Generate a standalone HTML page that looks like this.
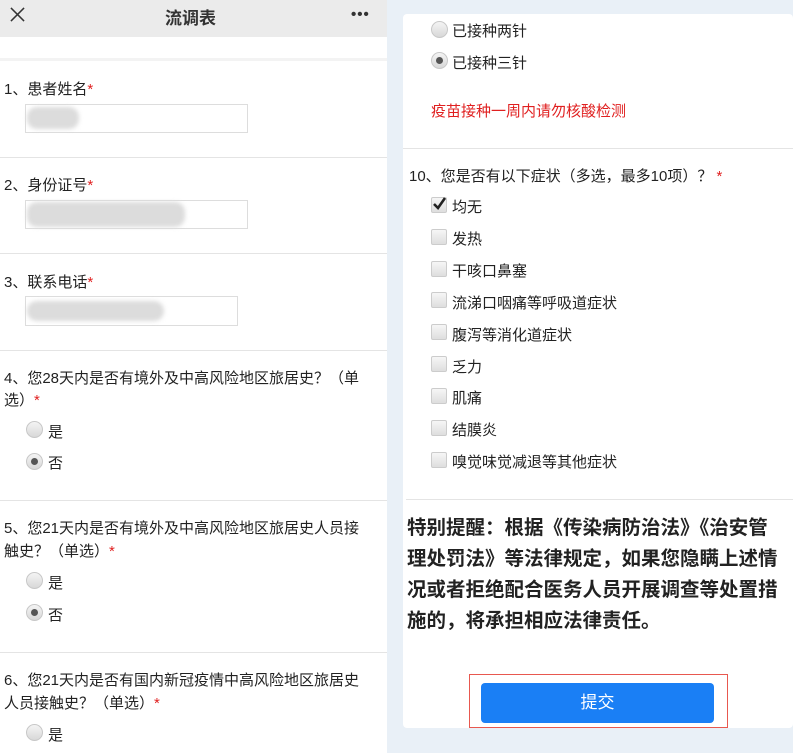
<!DOCTYPE html>
<html><head><meta charset="utf-8"><style>
*{margin:0;padding:0;box-sizing:border-box}
body{width:793px;height:753px;overflow:hidden;background:#e9f0f7;font-family:"Liberation Sans","Noto Sans CJK SC",sans-serif;color:#222;position:relative}
.a{position:absolute;white-space:nowrap}
.t{font-size:15px;line-height:20px}
.r{color:#e02020}
.sep{position:absolute;height:1px;background:#e4e4e4}
.inp{position:absolute;border:1px solid #ddd;background:#fff}
.blur{position:absolute;background:#dcdcdc;border-radius:10px;filter:blur(2px)}
.rad{position:absolute;width:17px;height:17px;border-radius:50%;background:linear-gradient(#f4f4f4,#d8d8d8);border:1px solid #c8c8c8}
.rad.on::after{content:"";position:absolute;left:4px;top:4px;width:7px;height:7px;border-radius:50%;background:#555}
.cb{position:absolute;width:16px;height:16px;border-radius:2px;background:linear-gradient(#f6f6f6,#dedede);border:1px solid #ccc}
</style></head><body>
<div class="a" style="left:0;top:0;width:387px;height:753px;background:#fff"></div>
<div class="a" style="left:0;top:0;width:387px;height:37px;background:#ebebeb"></div>
<svg class="a" style="left:10px;top:7px" width="15" height="15" viewBox="0 0 16 16"><path d="M1 1L15 15M15 1L1 15" stroke="#333" stroke-width="1.6"/></svg>
<div class="a" style="left:165px;top:4px;font-size:17px;font-weight:bold;color:#333">流调表</div>
<div class="a" style="left:351px;top:6px;font-size:15px;font-weight:bold;color:#333;letter-spacing:1px">•••</div>
<div class="a" style="left:0;top:58px;width:387px;height:3px;background:#f3f3f3"></div>

<div class="a t" style="left:4px;top:80px">1、患者姓名<span class="r">*</span></div>
<div class="inp" style="left:25px;top:104px;width:223px;height:29px"></div>
<div class="blur" style="left:27px;top:107px;width:52px;height:22px"></div>
<div class="sep" style="left:0;top:157px;width:387px"></div>

<div class="a t" style="left:4px;top:176px">2、身份证号<span class="r">*</span></div>
<div class="inp" style="left:25px;top:200px;width:223px;height:29px"></div>
<div class="blur" style="left:27px;top:202px;width:158px;height:25px"></div>
<div class="sep" style="left:0;top:253px;width:387px"></div>

<div class="a t" style="left:4px;top:273px">3、联系电话<span class="r">*</span></div>
<div class="inp" style="left:25px;top:296px;width:213px;height:30px"></div>
<div class="blur" style="left:27px;top:301px;width:137px;height:20px"></div>
<div class="sep" style="left:0;top:350px;width:387px"></div>

<div class="a t" style="left:4px;top:369px">4、您28天内是否有境外及中高风险地区旅居史？（单</div>
<div class="a t" style="left:4px;top:391px">选）<span class="r">*</span></div>
<div class="rad" style="left:26px;top:421px"></div><div class="a t" style="left:48px;top:423px">是</div>
<div class="rad on" style="left:26px;top:453px"></div><div class="a t" style="left:48px;top:454px">否</div>
<div class="sep" style="left:0;top:500px;width:387px"></div>

<div class="a t" style="left:4px;top:519px">5、您21天内是否有境外及中高风险地区旅居史人员接</div>
<div class="a t" style="left:4px;top:542px">触史？（单选）<span class="r">*</span></div>
<div class="rad" style="left:26px;top:572px"></div><div class="a t" style="left:48px;top:574px">是</div>
<div class="rad on" style="left:26px;top:604px"></div><div class="a t" style="left:48px;top:606px">否</div>
<div class="sep" style="left:0;top:652px;width:387px"></div>

<div class="a t" style="left:4px;top:671px">6、您21天内是否有国内新冠疫情中高风险地区旅居史</div>
<div class="a t" style="left:4px;top:694px">人员接触史？（单选）<span class="r">*</span></div>
<div class="rad" style="left:26px;top:724px"></div><div class="a t" style="left:48px;top:726px">是</div>

<div class="a" style="left:403px;top:14px;width:390px;height:714px;background:#fff;border-radius:4px"></div>
<div class="rad" style="left:431px;top:21px"></div><div class="a t" style="left:452px;top:22px">已接种两针</div>
<div class="rad on" style="left:431px;top:52px"></div><div class="a t" style="left:452px;top:54px">已接种三针</div>
<div class="a t r" style="left:431px;top:102px">疫苗接种一周内请勿核酸检测</div>
<div class="sep" style="left:403px;top:148px;width:390px"></div>
<div class="a t" style="left:409px;top:167px">10、您是否有以下症状（多选，最多10项）？ <span class="r">*</span></div>
<div class="cb" style="left:431px;top:197px"></div><svg class="a" style="left:432px;top:196px" width="15" height="15" viewBox="0 0 15 15"><path d="M2 8L6 12L13 2" stroke="#222" stroke-width="2.6" fill="none"/></svg>
<div class="a t" style="left:452px;top:198px">均无</div>
<div class="cb" style="left:431px;top:229px"></div><div class="a t" style="left:452px;top:230px">发热</div>
<div class="cb" style="left:431px;top:261px"></div><div class="a t" style="left:452px;top:262px">干咳口鼻塞</div>
<div class="cb" style="left:431px;top:292px"></div><div class="a t" style="left:452px;top:294px">流涕口咽痛等呼吸道症状</div>
<div class="cb" style="left:431px;top:324px"></div><div class="a t" style="left:452px;top:326px">腹泻等消化道症状</div>
<div class="cb" style="left:431px;top:356px"></div><div class="a t" style="left:452px;top:358px">乏力</div>
<div class="cb" style="left:431px;top:388px"></div><div class="a t" style="left:452px;top:389px">肌痛</div>
<div class="cb" style="left:431px;top:420px"></div><div class="a t" style="left:452px;top:421px">结膜炎</div>
<div class="cb" style="left:431px;top:452px"></div><div class="a t" style="left:452px;top:453px">嗅觉味觉减退等其他症状</div>
<div class="sep" style="left:406px;top:499px;width:387px"></div>
<div class="a" style="left:407px;top:513px;font-size:19.5px;line-height:31px;font-weight:bold;color:#222">特别提醒：根据《传染病防治法》《治安管<br>理处罚法》等法律规定，如果您隐瞒上述情<br>况或者拒绝配合医务人员开展调查等处置措<br>施的，将承担相应法律责任。</div>
<div class="a" style="left:469px;top:674px;width:259px;height:54px;border:1.5px solid #e8584f"></div>
<div class="a" style="left:481px;top:683px;width:233px;height:40px;background:#1a7ff5;border-radius:4px;color:#fff;font-size:17px;line-height:40px;text-align:center">提交</div>
</body></html>
